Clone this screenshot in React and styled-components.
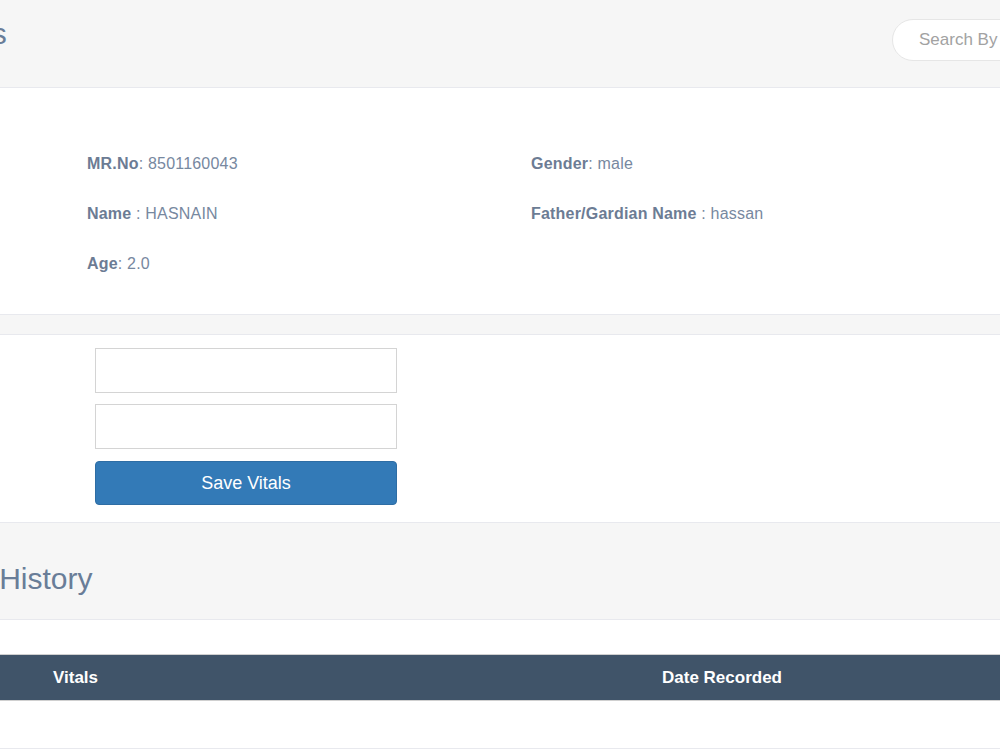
import React from 'react';
import styled, { createGlobalStyle } from 'styled-components';

const GlobalStyle = createGlobalStyle`
  html, body {
    margin: 0;
    padding: 0;
    background: #fff;
    font-family: "Liberation Sans", Arial, sans-serif;
  }
  * { box-sizing: border-box; }
`;

const Page = styled.div`
  width: 1000px;
  overflow: hidden;
`;

const Band = styled.div`
  display: flex;
  align-items: flex-start;
  background: #f6f6f6;
  height: ${p => p.$height}px;
  padding-top: ${p => p.$top}px;
  border-bottom: 1px solid #e8e9ee;
`;

const Heading = styled.h2`
  margin: 0 0 0 ${p => p.$indent}px;
  font-size: 30px;
  line-height: 34px;
  font-weight: normal;
  color: #697d98;
  white-space: nowrap;
`;

const Search = styled.input`
  margin: 2px -110px 0 auto;
  width: 218px;
  height: 42px;
  border: 1px solid #e6e6e6;
  border-radius: 21px;
  background: #fff;
  padding: 0 0 0 26px;
  font-family: inherit;
  font-size: 17px;
  outline: none;
  &::placeholder { color: #a2a2a2; }
`;

const Info = styled.section`
  display: grid;
  grid-template-columns: 444px 1fr;
  row-gap: 30px;
  padding: 66px 0 40px 87px;
  border-bottom: 1px solid #e8e9ee;
`;

const Field = styled.div`
  font-size: 16px;
  line-height: 20px;
  letter-spacing: 0.2px;
  color: #7788a0;
  b { color: #6c7c94; }
`;

const Gap = styled.div`
  height: 20px;
  background: #f6f6f6;
  border-bottom: 1px solid #e8e9ee;
`;

const Form = styled.form`
  display: flex;
  flex-direction: column;
  gap: 11px;
  width: 302px;
  margin-left: 95px;
  padding: 13px 0 17px;
`;

const Input = styled.input`
  height: 45px;
  border: 1px solid #d4d4d4;
  background: #fff;
  font-size: 16px;
  padding: 0 12px;
`;

const Button = styled.button`
  margin-top: 1px;
  height: 44px;
  border: 1px solid #2e6da4;
  border-radius: 4px;
  background: #337ab7;
  color: #fff;
  font-family: inherit;
  font-size: 18px;
`;

const FormSection = styled.section`
  border-bottom: 1px solid #e8e9ee;
`;

const Table = styled.div`
  margin-top: 34px;
  border-bottom: 1px solid #e8e9ee;
`;

const Head = styled.div`
  display: grid;
  grid-template-columns: 609px 1fr;
  align-items: center;
  height: 47px;
  padding-left: 53px;
  background: #405469;
  border-top: 1px solid #d0d0d0;
  border-bottom: 1px solid #d0d0d0;
  color: #fff;
  font-size: 17px;
  font-weight: bold;
`;

const Row = styled.div`
  height: 47px;
`;

export default function App() {
  return (
    <Page>
      <GlobalStyle />
      <Band $height={88} $top={17}>
        <Heading $indent={-66}>Vitals</Heading>
        <Search placeholder="Search By MR.No" />
      </Band>

      <Info>
        <Field><b>MR.No</b>: 8501160043</Field>
        <Field><b>Gender</b>: male</Field>
        <Field><b>Name </b>: HASNAIN</Field>
        <Field><b>Father/Gardian Name </b>: hassan</Field>
        <Field><b>Age</b>: 2.0</Field>
      </Info>

      <Gap />

      <FormSection>
        <Form onSubmit={e => e.preventDefault()}>
          <Input />
          <Input />
          <Button type="submit">Save Vitals</Button>
        </Form>
      </FormSection>

      <Band $height={97} $top={39}>
        <Heading $indent={-82}>Vitals History</Heading>
      </Band>

      <Table>
        <Head>
          <span>Vitals</span>
          <span>Date Recorded</span>
        </Head>
        <Row />
      </Table>
    </Page>
  );
}
